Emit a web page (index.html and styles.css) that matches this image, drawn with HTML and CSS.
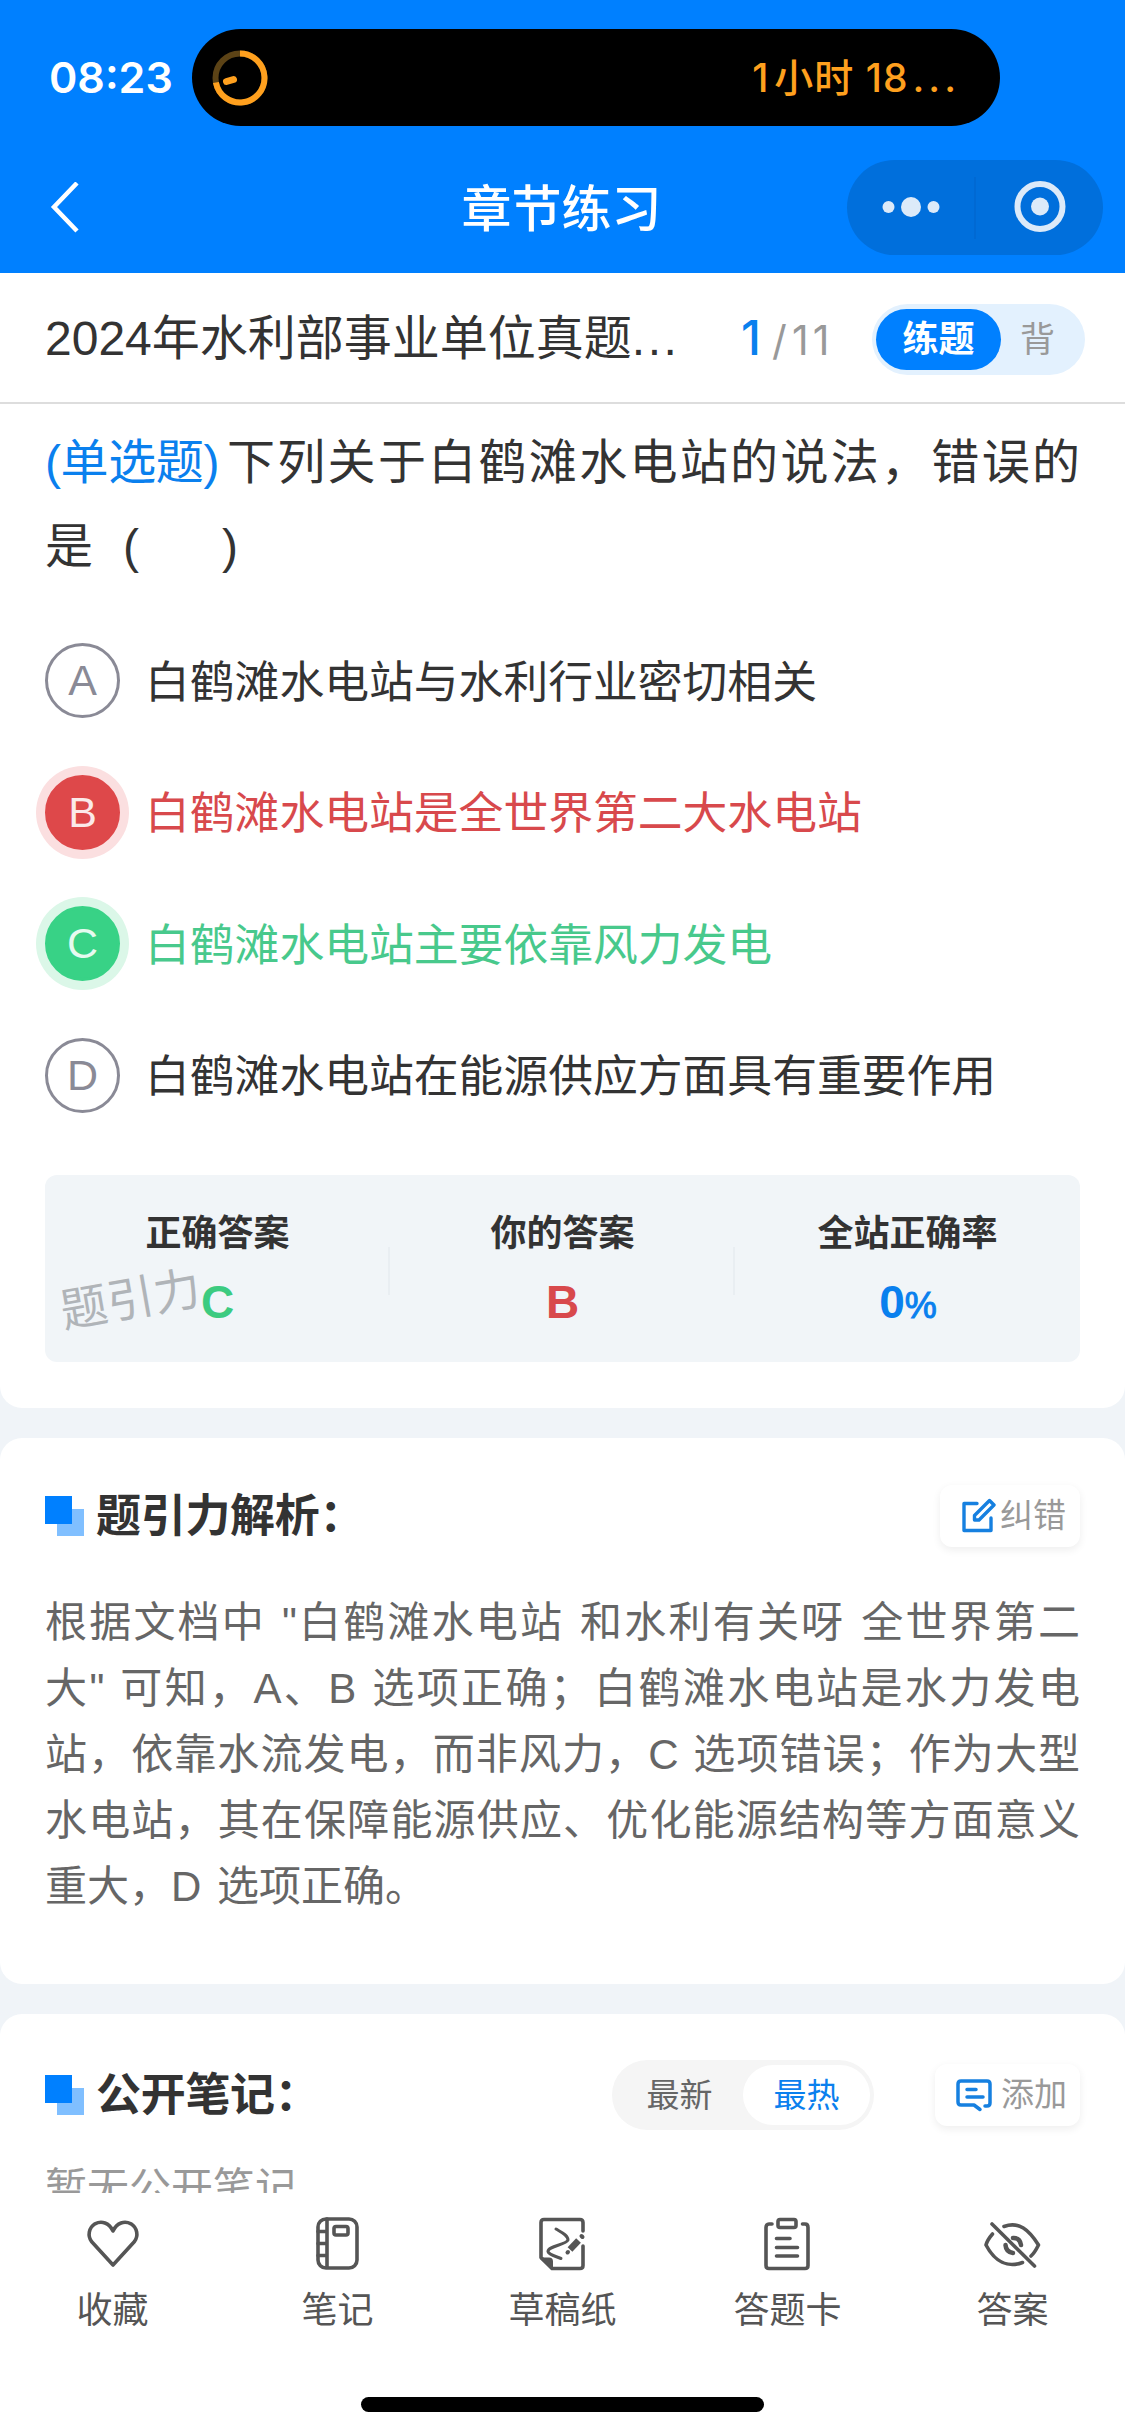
FILE: index.html
```html
<!DOCTYPE html>
<html lang="zh-CN">
<head>
<meta charset="utf-8">
<title>章节练习</title>
<link rel="stylesheet" href="styles.css">
</head>
<body>
<div class="app">
  <header class="header">
    <div class="status">
      <span class="clock">08:23</span>
      <div class="island">
        <svg width="56" height="56" viewBox="0 0 56 56" fill="none">
          <circle cx="28" cy="28" r="24.5" stroke="#5c4316" stroke-width="6"/>
          <path d="M28 3.5A24.5 24.5 0 1 1 3.9 32.5" stroke="#ffa01e" stroke-width="6"/>
          <path d="M21.500 29.500L14.500 31.500" stroke="#ffa01e" stroke-width="7" stroke-linecap="round"/>
        </svg>
        <span class="timer">1<i>小时</i> 18<b>...</b></span>
      </div>
    </div>
    <nav class="nav">
      <svg class="back" width="30" height="52" viewBox="0 0 30 52" fill="none" stroke="#fff" stroke-width="4.500"><path d="M27 1L4 25L27 49"/></svg>
      <h1>章节练习</h1>
      <div class="capsule">
        <svg width="256" height="95" viewBox="0 0 256 95" fill="#dceaf9">
          <circle cx="41.500" cy="47" r="6"/><circle cx="64" cy="47" r="10"/><circle cx="86.500" cy="47" r="6"/>
          <path d="M128 17V79" stroke="#0067d0" stroke-width="1.500"/>
          <circle cx="193" cy="46.500" r="22.500" fill="none" stroke="#dceaf9" stroke-width="6"/><circle cx="193" cy="46.500" r="9"/>
        </svg>
      </div>
    </nav>
  </header>

  <div class="paper-bar">
    <span class="paper-name">2024年水利部事业单位真题<i>...</i></span>
    <span class="progress"><b>1</b><span class="slash">/</span><span>11</span></span>
    <div class="mode"><span class="on">练题</span><span class="off">背</span></div>
  </div>

  <section class="card question">
    <p class="stem"><span class="type">(单选题)</span><span class="rest">下列关于白鹤滩水电站的说法，错误的</span></p>
    <p class="stem2"><span>是</span><span class="lp">(</span><span class="rp">)</span></p>
    <ul class="options">
      <li><span class="key">A</span><span class="opt">白鹤滩水电站与水利行业密切相关</span></li>
      <li class="wrong"><span class="key">B</span><span class="opt">白鹤滩水电站是全世界第二大水电站</span></li>
      <li class="right"><span class="key">C</span><span class="opt">白鹤滩水电站主要依靠风力发电</span></li>
      <li><span class="key">D</span><span class="opt">白鹤滩水电站在能源供应方面具有重要作用</span></li>
    </ul>
    <div class="result">
      <div><h3>正确答案</h3><strong class="c-green">C</strong></div>
      <div><h3>你的答案</h3><strong class="c-red">B</strong></div>
      <div><h3>全站正确率</h3><strong class="c-blue">0<small>%</small></strong></div>
      <span class="watermark">题引力</span>
    </div>
  </section>

  <section class="card analysis">
    <div class="head">
      <i class="mark"></i><h2>题引力解析：</h2>
      <button class="btn">
        <svg width="36" height="36" viewBox="0 0 36 36" fill="none" stroke="#1680e0" stroke-width="3.400" stroke-linejoin="round" stroke-linecap="round"><path d="M17 5.500H4V32.500H31V20"/><path d="M14.500 17.500L29.500 2.500L34 7L19 22H14.500Z"/></svg>
        <span>纠错</span>
      </button>
    </div>
    <div class="text">
      <p>根据文档中 "白鹤滩水电站 和水利有关呀 全世界第二</p>
      <p>大" 可知，A、B 选项正确；白鹤滩水电站是水力发电</p>
      <p>站，依靠水流发电，而非风力，C 选项错误；作为大型</p>
      <p>水电站，其在保障能源供应、优化能源结构等方面意义</p>
      <p class="last">重大，D 选项正确。</p>
    </div>
  </section>

  <section class="card notes">
    <div class="head">
      <i class="mark"></i><h2>公开笔记：</h2>
      <div class="sort"><span>最新</span><span class="on">最热</span></div>
      <button class="btn add">
        <svg width="38" height="36" viewBox="0 0 38 36" fill="none" stroke="#1680e0" stroke-width="3.500" stroke-linejoin="round" stroke-linecap="round"><path d="M30 29H32Q35 29 35 26V7Q35 4 32 4H6Q3 4 3 7V25Q3 28 6 28H19L25 32.500"/><path d="M12 12.500H21M12 20H28"/></svg>
        <span>添加</span>
      </button>
    </div>
    <p class="empty">暂无公开笔记</p>
  </section>

  <footer class="tabbar">
    <div class="tabs">
      <a><svg width="60" height="60" viewBox="0 0 60 60"><path d="M30 51L8.500 27.500C4.500 22 5.500 14 12 9.800C18.500 6.500 26 8.500 30 17C34 8.500 41.500 6.500 48 9.800C54.500 14 55.500 22 51.500 27.500Z"/></svg><span>收藏</span></a>
      <a><svg width="60" height="60" viewBox="0 0 60 60"><rect x="10" y="5" width="39" height="49" rx="8"/><path d="M19 5V53M10 17.500H19M10 29.500H19M10 41.500H19"/><rect x="26" y="12.500" width="14" height="8.500" rx="2"/></svg><span>笔记</span></a>
      <a><svg width="60" height="60" viewBox="0 0 60 60"><path d="M50 17V8.500Q50 5.500 47 5.500H11Q8 5.500 8 8.500V43.500L19 54.500H47Q50 54.500 50 51.500V32"/><path d="M8 44.500H16Q19 44.500 19 47.500V54.500Z" fill="#555" stroke-width="2"/><path d="M23 15C28 18 35 21 35 26C33 31 15 32 15 37.500C16 41 22 42 28 44.500" stroke-width="3"/><path d="M37 35.500L45.500 26.500" stroke-width="6.500" stroke-linecap="butt"/><path d="M48.500 22L49.500 23M34.500 38.500L35 38" stroke-width="4"/></svg><span>草稿纸</span></a>
      <a><svg width="60" height="60" viewBox="0 0 60 60"><path d="M14 10H11Q8 10 8 13.500V51.500Q8 54.500 11 54.500H47Q50 54.500 50 51.500V13.500Q50 10 47 10H44.500"/><rect x="20" y="5.500" width="18" height="8" rx="2"/><path d="M18.500 24.500H32M18.500 33.500H39.500M18.500 42H39.500"/></svg><span>答题卡</span></a>
      <a><svg width="60" height="60" viewBox="0 0 60 60"><path d="M9 10L51.500 52"/><path d="M21 12.500C36 7 46 16 55.500 31C53.500 35 51.500 39 48 42"/><path d="M9.500 20C6 24 4 27 3 31C12 48 25 54 39.500 48.500"/><path d="M30 24Q37 23.500 38 31" stroke-width="4.500"/><path d="M22.500 31Q23 38 30 39" stroke-width="4.500"/></svg><span>答案</span></a>
    </div>
    <div class="home"></div>
  </footer>
</div>
</body>
</html>
```
FILE: styles.css
```css
* { box-sizing: border-box; margin: 0; padding: 0; }
body { background: #f0f4f8; }
.app {
  width: 1125px; height: 2436px; overflow: hidden;
  display: flex; flex-direction: column;
  font-family: "Liberation Sans", "Noto Sans CJK SC", sans-serif;
  color: #333; font-size: 45px; white-space: nowrap;
}
i { font-style: normal; }
svg { display: block; flex: none; }

/* header */
.header { flex: none; height: 273px; background: #0080ff; color: #fff; }
.status { display: flex; padding: 29px 0 0 49px; height: 126px; }
.clock { width: 143px; font: 600 43px/97px Inter, sans-serif; }
.island {
  width: 808px; height: 97px; border-radius: 49px; background: #000;
  display: flex; align-items: center; justify-content: space-between; padding: 0 40px 0 20px;
}
.timer { color: #ffa01e; font: 500 39px/97px Inter, "Noto Sans CJK SC", sans-serif; letter-spacing: 1px; }
.timer i { margin-left: 5px; }
.timer b { font-weight: 500; letter-spacing: 4px; margin-left: 4px; }
.nav { display: grid; grid-template-columns: 278px 1fr 278px; align-items: center; height: 95px; margin-top: 34px; }
.back { margin-left: 50px; }
.nav h1 { text-align: center; font-size: 50px; line-height: 95px; font-weight: 500; padding-top: 3px; height: 95px; margin-left: -2px; }
.capsule { width: 256px; height: 95px; border-radius: 48px; background: #006fdc; }

/* paper bar */
.paper-bar {
  flex: none; height: 131px; background: #fff; border-bottom: 2px solid #ddd;
  display: flex; align-items: center; padding: 3px 40px 0 45px;
}
.paper-name { width: 696px; font-size: 48px; line-height: 72px; }
.paper-name i { letter-spacing: 2.5px; }
.progress { width: 131px; display: flex; align-items: baseline; color: #999; font: 400 41px/66px Inter, sans-serif; }
.progress b { font-size: 48px; font-weight: 500; color: #0a80ee; width: 31px; }
.progress span { letter-spacing: 4px; }
.progress .slash { width: 20px; }
.mode { width: 213px; height: 71px; border-radius: 36px; background: #e3f1fe; padding: 5px 4px; display: flex; align-items: center; }
.mode .on { width: 125px; height: 61px; border-radius: 31px; background: #0080ff; color: #fff; font-weight: 700; font-size: 36px; line-height: 61px; text-align: center; }
.mode .off { color: #999; font-size: 35px; line-height: 61px; margin-left: 19px; }

/* cards */
.card { flex: none; background: #fff; border-radius: 22px; padding: 0 45px; }
.question { height: 1004px; border-radius: 0 0 22px 22px; padding-top: 17px; }
.stem { display: flex; font-size: 48px; line-height: 84px; }
.type { color: #0a80ee; width: 182px; letter-spacing: -0.4px; }
.rest { flex: 1; text-align: justify; text-align-last: justify; }
.stem2 { display: flex; font-size: 48px; line-height: 83px; }
.lp { margin-left: 30px; }
.rp { margin-left: 83px; }
.options { list-style: none; margin-top: 27px; }
.options li { display: flex; align-items: center; height: 131.5px; line-height: 66px; gap: 25px; }
.opt { font-size: 44.8px; padding-top: 2px; }
.key {
  width: 75px; height: 75px; border-radius: 50%; border: 3px solid #8a8a96; color: #8a8a96;
  font-size: 43px; line-height: 68px; text-align: center;
}
.wrong, .c-red { color: #d8494c; }
.right { color: #48c98c; }
.c-green { color: #3ccb80; }
.c-blue { color: #0a80ee; }
.wrong .key { background: #de484a; border-color: #de484a; color: #fbe9e9; box-shadow: 0 0 0 9px #fbdfe0; }
.right .key { background: #38d286; border-color: #38d286; color: #e6faf0; box-shadow: 0 0 0 9px #dbf7e8; }
.result {
  position: relative; margin-top: 34px; height: 187px; border-radius: 12px; background: #f1f5f8;
  display: grid; grid-template-columns: repeat(3, 1fr); text-align: center;
}
.result > div { padding-top: 32px; background: linear-gradient(#e9eef2, #e9eef2) right 72px / 2px 48px no-repeat; }
.result > div:nth-child(3) { background: none; }
.result h3 { font-size: 36px; line-height: 54px; font-weight: 700; color: #333; }
.result strong { display: block; font-size: 46px; line-height: 52px; margin-top: 15px; }
.result small { font-size: 36px; letter-spacing: -1px; font-weight: 400; -webkit-text-stroke: 1px currentColor; }
.watermark { position: absolute; left: 15px; top: 92px; font-size: 47px; line-height: 66px; color: #b0b4b8; transform: rotate(-10deg); }

.head { display: flex; align-items: center; }
.mark {
  width: 39px; height: 40px; margin-right: 12px;
  background: linear-gradient(#0080ff, #0080ff) 0 0 / 27px 28px no-repeat,
    linear-gradient(#80bfff, #80bfff) 12px 13px / 27px 27px no-repeat;
}
.head h2 { font-size: 45px; line-height: 66px; font-weight: 700; padding-top: 1px; height: 66px; letter-spacing: -0.3px; }
.btn {
  margin-left: auto; width: 140px; height: 62px; border: 0; border-radius: 12px; background: #fff;
  box-shadow: 0 3px 8px rgba(0,0,0,.07); display: flex; align-items: center; gap: 4px; padding-left: 20px;
  font: 33px/60px "Liberation Sans", "Noto Sans CJK SC", sans-serif; color: #999;
}
.analysis { margin-top: 30px; height: 546px; padding-top: 45px; }
.text { margin-top: 41px; font-size: 42px; line-height: 66px; color: #666; word-spacing: 2px; }
.text p { text-align: justify; text-align-last: justify; }
.text .last { text-align-last: left; word-spacing: 4px; }

.notes { margin-top: 30px; height: 179px; border-radius: 22px 22px 0 0; padding-top: 46px; overflow: hidden; }
.sort {
  margin-left: auto; width: 262px; height: 70px; border-radius: 35px; background: #f5f5f5; padding: 5px 4px;
  display: flex; font-size: 33px; line-height: 61px; color: #666; text-align: center;
}
.sort span { flex: 1; }
.sort .on { background: #fff; border-radius: 30px; color: #0a80ee; }
.add { width: 145px; margin-left: 61px; padding-left: 20px; gap: 8px; }
.empty { font-size: 42px; line-height: 66px; color: #999; margin-top: 26px; }

/* bottom bar */
.tabbar { flex: 1; background: #fff; }
.tabs { display: grid; grid-template-columns: repeat(5, 1fr); padding-top: 21px; height: 204px; align-items: start; }
.tabs a { display: flex; flex-direction: column; align-items: center; color: #555; font-size: 36px; line-height: 54px; gap: 10px; }
.tabs svg { fill: none; stroke: #555; stroke-width: 3.6; stroke-linecap: round; stroke-linejoin: round; }
.home { width: 403px; height: 15px; border-radius: 8px; background: #000; margin: 0 auto; }
```
